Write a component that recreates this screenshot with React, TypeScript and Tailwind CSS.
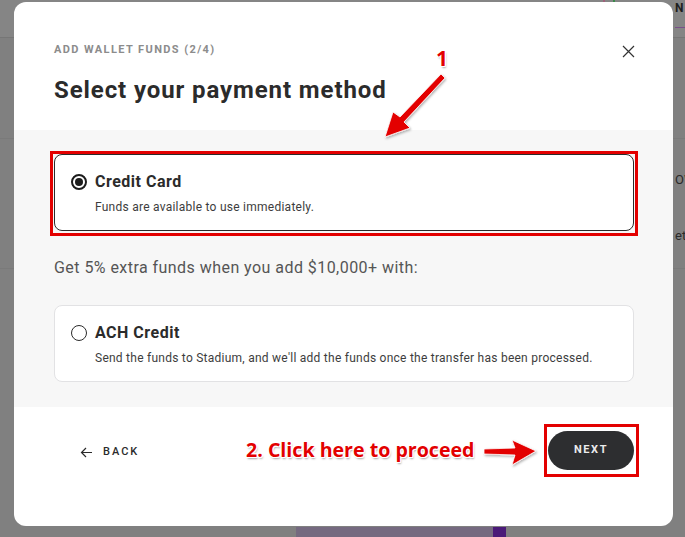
import React from "react";

const outline =
  "[text-shadow:1px_0_0_#fff,-1px_0_0_#fff,0_1px_0_#fff,0_-1px_0_#fff,1px_1px_0_#fff,-1px_-1px_0_#fff,1px_-1px_0_#fff,-1px_1px_0_#fff,1px_2px_2px_rgba(0,0,0,0.35)]";

function Radio({ checked }: { checked: boolean }) {
  return checked ? (
    <span className="flex h-4 w-4 shrink-0 items-center justify-center rounded-full border-2 border-[#1c1c1c]">
      <span className="h-2 w-2 rounded-full bg-[#1c1c1c]" />
    </span>
  ) : (
    <span className="h-4 w-4 shrink-0 rounded-full border-[1.5px] border-[#2b2b2b] bg-white" />
  );
}

function MethodCard({
  title,
  desc,
  checked,
}: {
  title: string;
  desc: string;
  checked: boolean;
}) {
  return (
    <div
      className={`flex h-[77px] flex-col justify-center rounded-lg border bg-white pl-[16px] ${
        checked ? "border-[#2b2b2b]" : "border-[#e2e2e4]"
      }`}
    >
      <div className="flex items-center gap-2">
        <Radio checked={checked} />
        <span className="text-[16px] font-bold tracking-[0.5px] text-[#2b2b2b]">{title}</span>
      </div>
      <div className="mt-[4px] pl-6 text-[12px] tracking-[0.25px] text-[#3d3d3d]">{desc}</div>
    </div>
  );
}

function Backdrop() {
  return (
    <div className="flex h-full flex-col">
      <div className="flex h-[38px] shrink-0 items-start justify-end border-b border-[#767676] bg-[#858585]">
        <div className="flex gap-2 pr-[60px]">
          <span className="h-[5px] w-[2px] bg-[#a0607a]" />
          <span className="h-[6px] w-[2px] bg-[#3a8a4a]" />
        </div>
        <div className="flex w-[10px] flex-col">
          <span className="text-[12px] font-bold leading-[16px] text-[#1e1e1e]">N</span>
          <span className="mt-[11px] h-px bg-[#7a4f8a]" />
        </div>
      </div>
      <div className="h-[101px] shrink-0 border-b border-[#7a7a7a]" />
      <div className="flex h-[130px] shrink-0 flex-col items-end border-b border-[#7a7a7a] pt-[31px] text-[13px] text-[#2a2a2a]">
        <span className="w-[10px] overflow-hidden whitespace-nowrap">OW</span>
        <span className="mt-[36px] w-[10px] overflow-hidden whitespace-nowrap">et</span>
      </div>
      <div className="flex-1" />
      <div className="flex h-[10px] shrink-0 pl-[296px]">
        <span className="w-[197px] bg-[#756a80]" />
        <span className="w-[13px] bg-[#4a1a78]" />
      </div>
    </div>
  );
}

export default function App() {
  return (
    <div
      className="relative h-[537px] w-[685px] overflow-hidden bg-[#808080]"
      style={{ fontFamily: "Roboto, 'Liberation Sans', sans-serif" }}
    >
      <Backdrop />

      {/* modal */}
      <div className="absolute left-[14px] top-[2px] flex h-[524px] w-[659px] flex-col overflow-hidden rounded-[12px] bg-white">
        <div className="flex h-[128px] shrink-0 justify-between pl-10 pr-[38px] pt-[40px]">
          <div>
            <div className="text-[11px] font-bold tracking-[1.4px] text-[#8c8c8c]">ADD WALLET FUNDS (2/4)</div>
            <div className="mt-[13px] text-[24px] font-bold tracking-[0.9px] text-[#2b2b2b]">
              Select your payment method
            </div>
          </div>
          <svg className="mt-[3px]" width="13" height="13" viewBox="0 0 13 13" fill="none" stroke="#333" strokeWidth="1.2">
            <path d="M1 1l11 11M12 1L1 12" />
          </svg>
        </div>

        <div className="flex h-[277px] shrink-0 flex-col bg-[#f7f7f7] pl-10 pr-[39px] pt-[24px]">
          <div className="relative">
            <MethodCard title="Credit Card" desc="Funds are available to use immediately." checked />
            <div className="pointer-events-none absolute -bottom-[5px] -left-[4px] -right-[4px] -top-[3px] border-[3px] border-[#e30000]" />
          </div>
          <div className="mt-[25px] text-[16px] tracking-[0.45px] text-[#555]">
            Get 5% extra funds when you add $10,000+ with:
          </div>
          <div className="mt-[25px]">
            <MethodCard
              title="ACH Credit"
              desc="Send the funds to Stadium, and we'll add the funds once the transfer has been processed."
              checked={false}
            />
          </div>
        </div>

        <div className="flex items-start justify-between pl-[66px] pr-[39px] pt-6">
          <div className="mt-[13px] flex items-center gap-[10px] text-[11px] font-medium tracking-[2px] text-[#2b2b2b]">
            <svg width="13" height="11" viewBox="0 0 13 11" fill="none" stroke="#2b2b2b" strokeWidth="1.2">
              <path d="M12 5.5H1.5M6 1L1.5 5.5L6 10" />
            </svg>
            BACK
          </div>
          <div className="relative">
            <div className="flex h-[39px] w-[86px] items-center justify-center rounded-full bg-[#2d2e30] text-[11px] font-bold tracking-[1.6px] text-[#ececec]">
              NEXT
            </div>
            <div className="pointer-events-none absolute -bottom-[7px] -left-[4px] -right-[5px] -top-[7px] border-[3px] border-[#e30000]" />
          </div>
        </div>
      </div>

      {/* annotations */}
      <div
        className={`absolute left-[436px] top-[43px] text-[21px] font-bold text-[#e30000] ${outline}`}
        style={{ fontFamily: "'Open Sans', sans-serif" }}
      >
        1
      </div>
      <svg className="absolute left-0 top-0" width="685" height="537" viewBox="0 0 685 537">
        <defs>
          <filter id="sh" x="-20%" y="-20%" width="140%" height="140%">
            <feDropShadow dx="1" dy="1.5" stdDeviation="1" floodColor="#000" floodOpacity="0.3" />
          </filter>
        </defs>
        <polygon
          points="385,137 393,112 400,117 441,74 445,78 404,122 410,128"
          fill="#e30000"
          stroke="#fff"
          strokeWidth="0.8"
          filter="url(#sh)"
        />
        <polygon
          points="536,451 512,440 515,448 484,449 484,454 515,455 512,465"
          fill="#e30000"
          stroke="#fff"
          strokeWidth="0.8"
          filter="url(#sh)"
        />
      </svg>
      <div
        className={`absolute left-[246px] top-[436px] text-[19.6px] font-bold leading-[28px] text-[#e30000] ${outline}`}
        style={{ fontFamily: "'Open Sans', sans-serif" }}
      >
        2. Click here to proceed
      </div>
    </div>
  );
}
